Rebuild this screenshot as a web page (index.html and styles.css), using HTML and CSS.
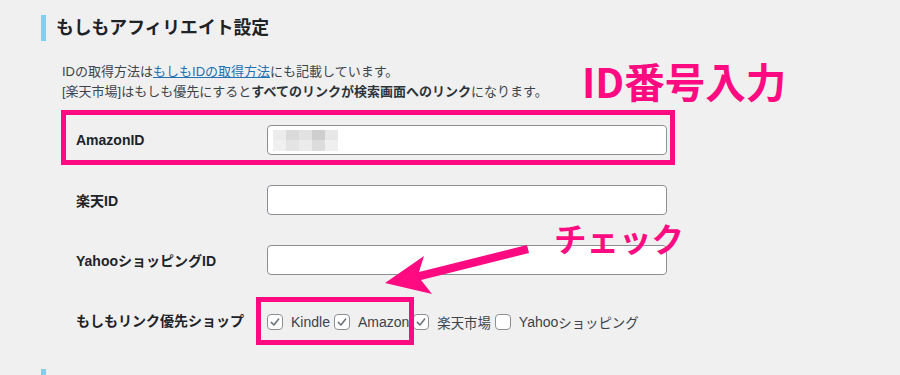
FILE: index.html
```html
<!DOCTYPE html>
<html lang="ja">
<head>
<meta charset="utf-8">
<title>もしもアフィリエイト設定</title>
<link rel="stylesheet" href="styles.css">
</head>
<body>
<div class="page">
  <h2 class="sec-title">もしもアフィリエイト設定</h2>
  <p class="desc">IDの取得方法は<a href="#">もしもIDの取得方法</a>にも記載しています。<br>[楽天市場]はもしも優先にすると<b>すべてのリンクが検索画面へのリンク</b>になります。</p>

  <div class="form-table">
    <div class="row">
      <div class="th">AmazonID</div>
      <div class="td"><div class="input"><span class="mosaic"></span></div></div>
    </div>
    <div class="row">
      <div class="th">楽天ID</div>
      <div class="td"><div class="input"></div></div>
    </div>
    <div class="row">
      <div class="th">YahooショッピングID</div>
      <div class="td"><div class="input"></div></div>
    </div>
    <div class="row">
      <div class="th">もしもリンク優先ショップ</div>
      <div class="td checks">
        <label class="check"><span class="box on"><svg viewBox="0 0 16 16"><path d="M3.8 8.4 L6.8 11.4 L12.2 4.6"/></svg></span>Kindle</label>
        <label class="check"><span class="box on"><svg viewBox="0 0 16 16"><path d="M3.8 8.4 L6.8 11.4 L12.2 4.6"/></svg></span>Amazon</label>
        <label class="check"><span class="box on"><svg viewBox="0 0 16 16"><path d="M3.8 8.4 L6.8 11.4 L12.2 4.6"/></svg></span><span class="ja">楽天市場</span></label>
        <label class="check"><span class="box"></span>Yahoo<span class="ja">ショッピング</span></label>
      </div>
    </div>
  </div>

  <div class="sec-bar"></div>

  <div class="note note-id">ID番号入力</div>
  <div class="note note-check">チェック</div>
  <div class="frame frame-id"></div>
  <div class="frame frame-check"></div>
  <svg class="arrow" viewBox="0 0 900 375" width="900" height="375">
    <polygon points="385,283 424,256 419,272 527,245 529,253 421,280 432,294"/>
  </svg>
</div>
</body>
</html>
```

FILE: styles.css
```css
html, body {
  margin: 0;
  padding: 0;
  background: #f0f0f1;
}
body {
  font-family: "Liberation Sans", "Noto Sans CJK JP", sans-serif;
  color: #3c434a;
  font-size: 13px;
  overflow: hidden;
  height: 375px;
}
.page {
  position: relative;
  width: 900px;
  height: 375px;
  padding-left: 41px;
  padding-top: 15px;
  box-sizing: border-box;
  overflow: hidden;
}
.sec-title {
  margin: 0;
  border-left: 5px solid #80cff5;
  padding-left: 10px;
  height: 26px;
  line-height: 26px;
  font-size: 17.8px;
  font-weight: bold;
  color: #1d2327;
}
.sec-bar {
  margin-top: 19px;
  width: 5px;
  height: 26px;
  background: #80cff5;
}
.desc {
  margin: 21px 0 0 21px;
  line-height: 19.5px;
  font-size: 13px;
}
.desc a {
  color: #2271b1;
  text-decoration: underline;
}
.desc b {
  font-weight: bold;
  color: #2c3338;
}
.form-table {
  margin: 9px 0 0 21px;
  display: flex;
  flex-direction: column;
}
.row {
  display: grid;
  grid-template-columns: 205px 400px;
  height: 60px;
  align-items: center;
}
.th {
  padding-left: 14px;
  font-size: 14px;
  font-weight: bold;
  color: #1d2327;
}
.input {
  height: 30px;
  box-sizing: border-box;
  border: 1px solid #8c8f94;
  border-radius: 4px;
  background: #fff;
  display: flex;
  align-items: center;
  padding-left: 5px;
}
.mosaic {
  width: 65px;
  height: 21px;
  background:
    linear-gradient(to right, #ececec 0 13px, #dadada 13px 26px, #e2e2e2 26px 39px, #cecece 39px 52px, #e7e7e7 52px 65px) top / 100% 10px no-repeat,
    linear-gradient(to right, #f0f0f0 0 13px, #e4e4e4 13px 26px, #ebebeb 26px 39px, #dcdcdc 39px 52px, #efefef 52px 65px) bottom / 100% 11px no-repeat;
}
.checks {
  display: flex;
  align-items: center;
  padding-top: 3px;
}
.check {
  display: flex;
  align-items: center;
  font-size: 14px;
  color: #3c434a;
  margin-right: 4px;
}
.ja {
  font-size: 13.4px;
}
.box {
  width: 16px;
  height: 16px;
  box-sizing: border-box;
  border: 1px solid #8c8f94;
  border-radius: 4px;
  background: #fff;
  margin-right: 8px;
  display: flex;
}
.box svg {
  width: 14px;
  height: 14px;
  fill: none;
  stroke: #687078;
  stroke-width: 1.7;
  stroke-linecap: round;
  stroke-linejoin: round;
}
.note {
  position: absolute;
  color: #ff0a80;
  font-family: "Noto Sans CJK JP", sans-serif;
  font-weight: bold;
  white-space: nowrap;
}
.note-id {
  left: 582px;
  top: 56px;
  font-size: 40.5px;
  line-height: 50px;
}
.note-check {
  left: 554px;
  top: 216px;
  font-size: 32.5px;
  line-height: 44px;
}
.frame {
  position: absolute;
  border: 5px solid #ff0a80;
  box-sizing: border-box;
}
.frame-id {
  left: 61px;
  top: 110px;
  width: 614px;
  height: 55px;
}
.frame-check {
  left: 256px;
  top: 297px;
  width: 158px;
  height: 48px;
}
.arrow {
  position: absolute;
  left: 0;
  top: 0;
  pointer-events: none;
}
.arrow polygon {
  fill: #ff0a80;
}
```
